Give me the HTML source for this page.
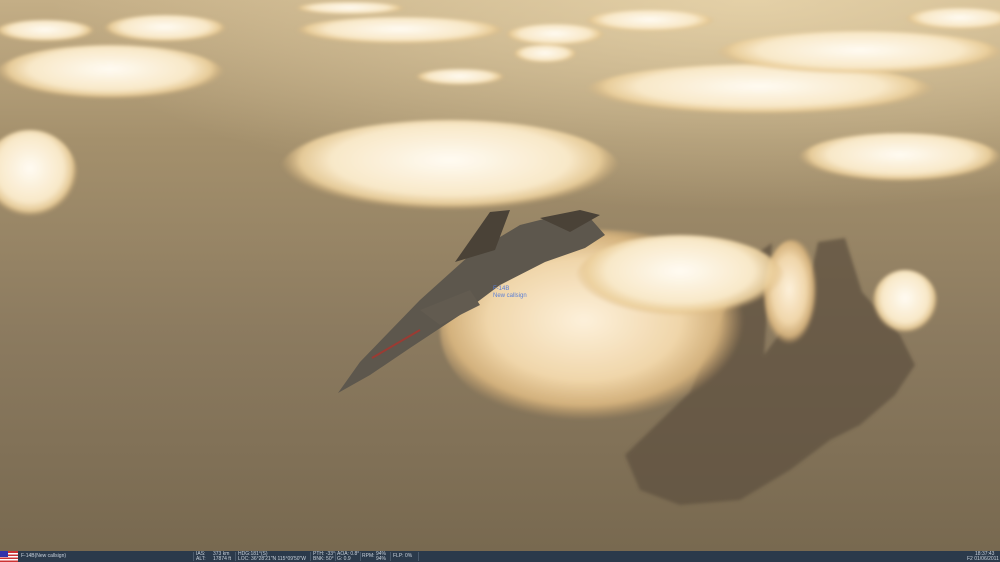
<!DOCTYPE html>
<html><head><meta charset="utf-8"><style>
html,body{margin:0;padding:0;width:1000px;height:562px;overflow:hidden;background:#8a7a60}
svg{display:block}
.bar{position:absolute;left:0;top:551px;width:1000px;height:11px;background:#2b3a4b;font-family:"Liberation Sans",sans-serif;font-size:5px;color:#c9d2dc;line-height:5px}
.bar span{position:absolute}
.sep{position:absolute;top:1px;width:1px;height:9px;background:#4a5a6c}
.lbl{position:absolute;left:493px;top:286px;font-family:"Liberation Sans",sans-serif;font-size:6px;color:#5b7fd6;line-height:7px}
</style></head><body>
<svg width="1000" height="562" viewBox="0 0 1000 562">
<defs>
<linearGradient id="bg" x1="0" y1="0" x2="0" y2="1">
<stop offset="0" stop-color="#c4ae86"/><stop offset="0.25" stop-color="#a4906c"/>
<stop offset="0.6" stop-color="#8b7a5f"/><stop offset="1" stop-color="#77684f"/></linearGradient>
<radialGradient id="glow" cx="0.75" cy="0" r="0.7"><stop offset="0" stop-color="#f2dfb5" stop-opacity="0.7"/><stop offset="1" stop-color="#f2dfb5" stop-opacity="0"/></radialGradient>
<radialGradient id="cl" cx="0.5" cy="0.4" r="0.5"><stop offset="0" stop-color="#fffbf2"/><stop offset="0.7" stop-color="#f8e8c8"/><stop offset="0.88" stop-color="#ecd09c" stop-opacity="0.9"/><stop offset="1" stop-color="#d9b47a" stop-opacity="0"/></radialGradient>
<radialGradient id="cl2" cx="0.45" cy="0.45" r="0.5"><stop offset="0" stop-color="#fdf0da"/><stop offset="0.6" stop-color="#f0d6aa"/><stop offset="0.85" stop-color="#e0bb82" stop-opacity="0.85"/><stop offset="1" stop-color="#d0a870" stop-opacity="0"/></radialGradient>
<filter id="b4"><feGaussianBlur stdDeviation="4"/></filter>
<filter id="b2"><feGaussianBlur stdDeviation="1.5"/></filter>
</defs>
<rect width="1000" height="562" fill="url(#bg)"/>
<rect width="1000" height="300" fill="url(#glow)"/>
<!-- shadow -->
<polygon filter="url(#b2)" fill="#5e5141" opacity="0.75" points="625,455 690,392 745,262 772,243 764,355 805,300 818,242 845,238 862,292 900,335 915,365 895,395 860,425 830,440 790,470 740,500 680,505 640,490"/>
<!-- clouds -->
<g filter="url(#b2)">
<ellipse cx="110" cy="75" rx="115" ry="30" fill="url(#cl)"/>
<ellipse cx="30" cy="178" rx="48" ry="48" fill="url(#cl)"/>
<ellipse cx="165" cy="30" rx="62" ry="15" fill="url(#cl)"/>
<ellipse cx="45" cy="32" rx="50" ry="12" fill="url(#cl)"/>
<ellipse cx="400" cy="32" rx="105" ry="15" fill="url(#cl)"/>
<ellipse cx="350" cy="9" rx="55" ry="7" fill="url(#cl)"/>
<ellipse cx="460" cy="78" rx="45" ry="9" fill="url(#cl)"/>
<ellipse cx="555" cy="36" rx="50" ry="12" fill="url(#cl)"/>
<ellipse cx="650" cy="22" rx="65" ry="12" fill="url(#cl)"/>
<ellipse cx="545" cy="55" rx="32" ry="10" fill="url(#cl)"/>
<ellipse cx="760" cy="92" rx="175" ry="28" fill="url(#cl)"/>
<ellipse cx="860" cy="55" rx="145" ry="24" fill="url(#cl)"/>
<ellipse cx="960" cy="20" rx="55" ry="12" fill="url(#cl)"/>
<ellipse cx="900" cy="160" rx="102" ry="27" fill="url(#cl)"/>
<ellipse cx="450" cy="170" rx="170" ry="50" fill="url(#cl)"/>
<ellipse cx="905" cy="305" rx="33" ry="35" fill="url(#cl)"/>
<ellipse cx="792" cy="295" rx="28" ry="55" fill="url(#cl2)"/>
<ellipse cx="600" cy="330" rx="160" ry="100" fill="url(#cl2)"/>
<ellipse cx="680" cy="280" rx="105" ry="45" fill="url(#cl)"/>
</g>
<!-- aircraft -->
<g>
<polygon fill="#5d574d" points="338,393 360,362 420,300 470,255 520,225 560,215 590,218 605,235 585,248 545,262 500,285 460,315 410,348 370,375"/>
<polygon fill="#4a4237" points="455,262 490,212 510,210 495,250"/>
<polygon fill="#4a4237" points="540,218 580,210 600,215 570,232"/>
<polygon fill="#625b50" points="420,310 470,290 480,305 440,325"/>
<line x1="372" y1="358" x2="420" y2="330" stroke="#9b3b33" stroke-width="2"/>
</g>
</svg>
<div class="lbl">F-14B<br>New callsign</div>
<div class="bar">
<svg style="position:absolute;left:0;top:0" width="18" height="11"><rect width="18" height="11" fill="#c33"/><rect y="2" width="18" height="1.5" fill="#fff"/><rect y="5" width="18" height="1.5" fill="#fff"/><rect y="8" width="18" height="1.5" fill="#fff"/><rect width="8" height="6" fill="#33a"/></svg>
<span style="left:21px;top:3px">F-14B(New callsign)</span>
<div class="sep" style="left:193px"></div>
<span style="left:196px;top:1px">IAS:<br>ALT:</span><span style="left:213px;top:1px">373 km<br>17874 ft</span>
<div class="sep" style="left:235px"></div>
<span style="left:238px;top:1px">HDG:181°(S)<br>LOC: 36°28'21"N 115°09'50"W</span>
<div class="sep" style="left:310px"></div>
<span style="left:313px;top:1px">PTH: -33°<br>BNK: 50°</span>
<div class="sep" style="left:335px"></div>
<span style="left:337px;top:1px">AOA: 0.8°<br>G: 0.9</span>
<div class="sep" style="left:360px"></div>
<span style="left:362px;top:3px">RPM:</span><span style="left:376px;top:1px">94%<br>94%</span>
<div class="sep" style="left:390px"></div>
<span style="left:393px;top:3px">FLP: 0%</span>
<div class="sep" style="left:418px"></div>
<span style="left:975px;top:1px">18:37:43</span>
<span style="left:967px;top:6px">F2 01/06/2011</span>
</div>
</body></html>
